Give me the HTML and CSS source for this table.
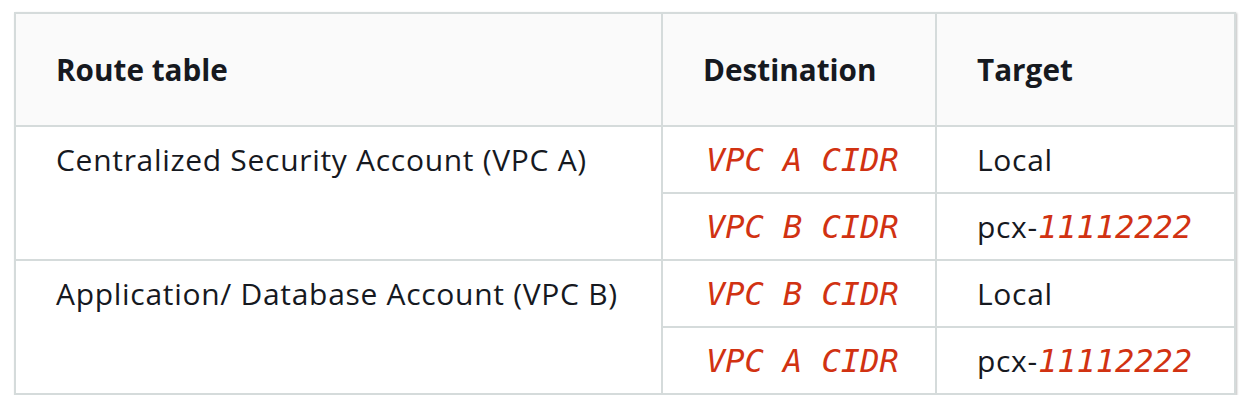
FILE: index.html
```html
<!DOCTYPE html>
<html>
<head>
<meta charset="utf-8">
<link rel="stylesheet" href="styles.css">
</head>
<body>
<div class="wrap">
<table class="routes">
  <colgroup>
    <col class="c1">
    <col class="c2">
    <col class="c3">
  </colgroup>
  <thead>
    <tr>
      <th>Route table</th>
      <th>Destination</th>
      <th>Target</th>
    </tr>
  </thead>
  <tbody>
    <tr>
      <td rowspan="2" class="name">Centralized Security Account (VPC A)</td>
      <td class="dest"><code>VPC A CIDR</code></td>
      <td>Local</td>
    </tr>
    <tr>
      <td class="dest"><code>VPC B CIDR</code></td>
      <td>pcx-<code>11112222</code></td>
    </tr>
    <tr>
      <td rowspan="2" class="name">Application/ Database Account (VPC B)</td>
      <td class="dest"><code>VPC B CIDR</code></td>
      <td>Local</td>
    </tr>
    <tr>
      <td class="dest"><code>VPC A CIDR</code></td>
      <td>pcx-<code>11112222</code></td>
    </tr>
  </tbody>
</table>
</div>
</body>
</html>
```

FILE: styles.css
```css
html, body {
  margin: 0;
  padding: 0;
  background: #ffffff;
}

.wrap {
  padding: 12px 12px 0 14px;
}

.routes {
  width: 1220px;
  border-collapse: collapse;
  table-layout: fixed;
  font-family: "Open Sans", "Noto Sans", sans-serif;
  font-size: 30px;
  letter-spacing: 0.7px;
  color: #16191f;
  box-shadow: 1px 1px 2px rgba(0, 0, 0, 0.25);
}

.c1 { width: 647px; }
.c2 { width: 274px; }
.c3 { width: 299px; }

.routes th,
.routes td {
  border: 2px solid #d5dbdb;
  text-align: left;
  padding: 0 40px;
  white-space: nowrap;
}

.routes th {
  background: #fafafa;
  font-weight: 700;
  font-size: 29.7px;
  letter-spacing: 0;
  height: 111px;
  vertical-align: middle;
}

.routes td {
  height: 65px;
  line-height: 40px;
  padding-top: 13px;
  padding-bottom: 12px;
  vertical-align: top;
  box-sizing: border-box;
}

.routes td.dest {
  padding-left: 43px;
  padding-right: 30px;
}

.routes code {
  font-family: "DejaVu Sans Mono", monospace;
  font-style: italic;
  font-size: 32px;
  letter-spacing: 0;
  color: #d13212;
}
```
